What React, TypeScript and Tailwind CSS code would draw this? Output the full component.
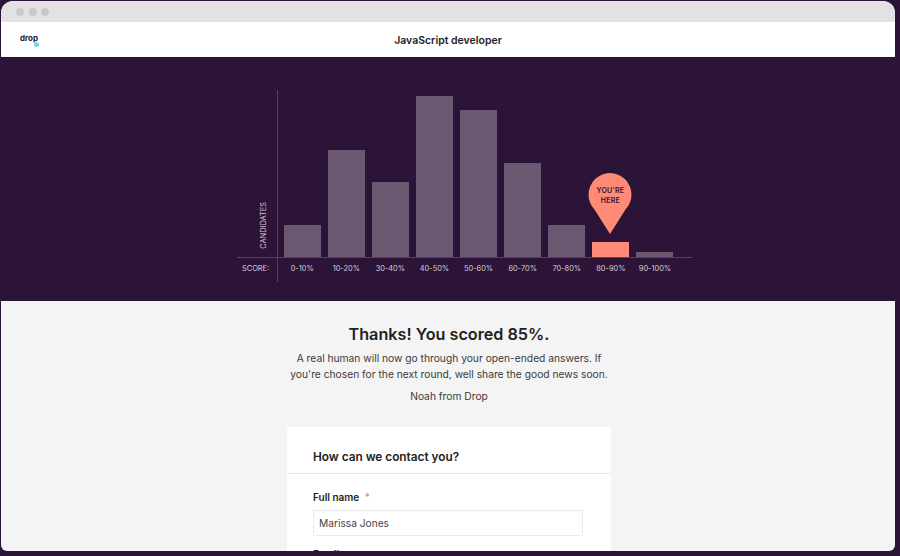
const bars = [
  { label: "0-10%", height: 32 },
  { label: "10-20%", height: 107 },
  { label: "30-40%", height: 75 },
  { label: "40-50%", height: 161 },
  { label: "50-60%", height: 147 },
  { label: "60-70%", height: 94 },
  { label: "70-80%", height: 32 },
  { label: "80-90%", height: 15, active: true },
  { label: "90-100%", height: 5 },
];

function Pin() {
  return (
    <div className="absolute bottom-[22px] left-[-4px] h-[63px] w-[44px]">
      <svg width="44" height="63" viewBox="0 0 44 63" className="absolute inset-0">
        <path d="M22 62 L6.5 37.5 A21.5 21.5 0 1 1 37.5 37.5 Z" fill="#ff8a75" />
      </svg>
      <div className="absolute inset-x-0 top-[14px] text-center text-[7px] leading-[10px] font-semibold tracking-[0.2px] text-[#2c1338]">
        YOU'RE
        <br />
        HERE
      </div>
    </div>
  );
}

export default function App() {
  return (
    <div className="h-[556px] w-[900px] overflow-hidden bg-[#2c1338] pt-px pl-px font-['Inter',sans-serif]">
      <div className="flex h-[550px] w-[894px] flex-col overflow-hidden rounded-t-[12px] rounded-b-[6px] bg-[#f4f4f4]">
        <div className="flex h-[21px] shrink-0 items-center gap-[4.5px] bg-[#e4e1e4] pl-[15px]">
          <span className="h-[8px] w-[8px] rounded-full bg-[#cbc8cd]" />
          <span className="h-[8px] w-[8px] rounded-full bg-[#cbc8cd]" />
          <span className="h-[8px] w-[8px] rounded-full bg-[#cbc8cd]" />
        </div>

        <header className="relative flex h-[35px] shrink-0 items-center justify-center bg-white pt-[2px]">
          <div className="absolute top-[11px] left-[19px] text-[8px] leading-[10px] font-bold text-[#222]">
            drop
            <span className="absolute top-[9px] left-[14px] h-[5px] w-[5px] rounded-full bg-[#7dd3d8]" />
          </div>
          <h1 className="text-[10.5px] font-semibold text-[#222]">JavaScript developer</h1>
        </header>

        <section className="h-[244px] shrink-0 bg-[#2c1338] pt-[33px] pl-[236px]">
          <div className="w-[455px]">
            <div className="flex h-[168px] border-b border-[#54405f]">
              <div className="relative w-[41px] shrink-0 border-r border-[#54405f]">
                <span className="absolute right-[8px] bottom-[8px] rotate-180 text-[7.4px] leading-[10px] text-[#d6cfda] [writing-mode:vertical-rl]">
                  CANDIDATES
                </span>
              </div>
              <div className="flex items-end gap-[7.1px] pl-[5.7px]">
                {bars.map((b) => (
                  <div
                    key={b.label}
                    className={`relative w-[37px] ${b.active ? "bg-[#ff8a75]" : "bg-[#6a5870]"}`}
                    style={{ height: b.height }}
                  >
                    {b.active && <Pin />}
                  </div>
                ))}
              </div>
            </div>
            <div className="flex h-[24px]">
              <div className="w-[41px] shrink-0 border-r border-[#54405f] pt-[6px] pl-[5px] text-[7.4px] leading-[10px] text-[#d6cfda]">
                SCORE:
              </div>
              <div className="flex gap-[7.1px] pl-[5.7px]">
                {bars.map((b) => (
                  <span key={b.label} className="w-[37px] pt-[6px] text-center text-[7.4px] leading-[10px] whitespace-nowrap text-[#d6cfda]">
                    {b.label}
                  </span>
                ))}
              </div>
            </div>
          </div>
        </section>

        <main className="flex flex-col items-center pt-[22px] pl-[2px]">
          <h2 className="text-[16.2px] leading-[22px] font-semibold text-[#222]">Thanks! You scored 85%.</h2>
          <p className="mt-[6px] w-[340px] text-center text-[10.25px] leading-[15.5px] text-[#3a3a3a]">
            A real human will now go through your open-ended answers. If
            <br />
            you're chosen for the next round, well share the good news soon.
          </p>
          <p className="mt-[6px] text-[10.25px] leading-[16px] text-[#3a3a3a]">Noah from Drop</p>

          <div className="mt-[23px] w-[324px] bg-white">
            <div className="border-b border-[#e8e8e8] px-[26px] pt-[22px] pb-[8px] text-[11.8px] leading-[16px] font-semibold text-[#222]">
              How can we contact you?
            </div>
            <div className="px-[26px] pt-[16px] pb-[20px]">
              <label className="block text-[10px] leading-[14px] font-semibold text-[#222]">
                Full name <span className="ml-[3px] text-[#ff8a75]">*</span>
              </label>
              <input
                readOnly
                value="Marissa Jones"
                className="mt-[6px] block h-[26px] w-[270px] border border-[#ececec] px-[5px] text-[10.2px] text-[#444] outline-none"
              />
              <label className="mt-[11px] block text-[10px] leading-[14px] font-semibold text-[#222]">Email</label>
            </div>
          </div>
        </main>
      </div>
    </div>
  );
}
